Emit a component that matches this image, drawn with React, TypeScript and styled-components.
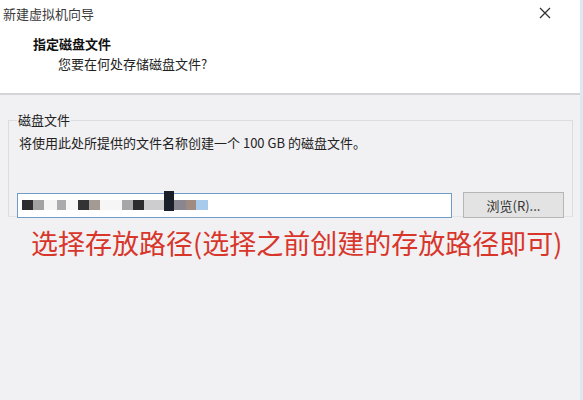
import React from "react";
import styled, { createGlobalStyle } from "styled-components";

const GlobalStyle = createGlobalStyle`
  html, body {
    margin: 0;
    padding: 0;
    background: #f1f0f2;
  }
  body {
    font-family: "Noto Sans CJK SC", "Liberation Sans", sans-serif;
    color: #1a1a1a;
  }
`;

const Window = styled.div`
  width: 583px;
  height: 400px;
  display: flex;
  flex-direction: column;
  background: #f1f0f2;
  border-right: 3px solid #dfe8f2;
  box-sizing: border-box;
  overflow: hidden;
`;

const Header = styled.div`
  height: 93px;
  background: #ffffff;
  border-bottom: 2px solid #d4d3d6;
  display: flex;
  flex-direction: column;
  box-sizing: content-box;
`;

const TitleBar = styled.div`
  height: 26px;
  display: flex;
  align-items: center;
  justify-content: space-between;
  padding: 0 29px 0 3px;
`;

const TitleText = styled.span`
  font-size: 13px;
  color: #3a3a3a;
  line-height: 1;
`;

const CloseIcon = styled.svg`
  width: 12px;
  height: 12px;
`;

const HeadTitle = styled.div`
  margin: 8px 0 0 33px;
  font-size: 13px;
  font-weight: 700;
  line-height: 20px;
  color: #111;
`;

const HeadSub = styled.div`
  margin: 0 0 0 58px;
  font-size: 13px;
  line-height: 20px;
  color: #222;
`;

const Body = styled.div`
  flex: 1;
  padding: 18px 9px 0 8px;
  display: flex;
  flex-direction: column;
`;

const GroupBox = styled.fieldset`
  margin: 0 2px 0 0;
  padding: 4px 8px 6px 8px;
  border: 1px solid #dcdbde;
  border-bottom-color: #e3e2e5;
  height: 104px;
  box-sizing: border-box;
  display: flex;
  flex-direction: column;
`;

const Legend = styled.legend`
  font-size: 13px;
  padding: 0 1px;
  margin-left: 0;
  color: #222;
  line-height: 14px;
`;

const GroupText = styled.div`
  font-size: 13px;
  line-height: 20px;
  color: #222;
  margin: 2px 0 0 2px;
`;

const PathRow = styled.div`
  margin-top: 39px;
  display: flex;
  align-items: center;
  gap: 11px;
`;

const PathInput = styled.div`
  width: 435px;
  height: 25px;
  box-sizing: border-box;
  border: 1px solid #6f9ccb;
  background: #ffffff;
  display: flex;
  align-items: center;
  padding-left: 4px;
`;

const Blur = styled.span<{ $w: number; $c: string; $tall?: boolean }>`
  display: inline-block;
  width: ${(p) => p.$w}px;
  height: ${(p) => (p.$tall ? 20 : 10)}px;
  margin-top: ${(p) => (p.$tall ? -8 : 0)}px;
  background: ${(p) => p.$c};
  flex: none;
`;

const Browse = styled.button`
  width: 101px;
  height: 26px;
  border: 1px solid #b6b6b6;
  background: #e3e3e3;
  font-family: inherit;
  font-size: 13px;
  color: #333;
  padding: 0;
  line-height: 1;
`;

const Note = styled.div`
  margin: 9px 0 0 23px;
  font-size: 27px;
  line-height: 34px;
  color: #d8362b;
  white-space: nowrap;
`;

const blocks: { w: number; c: string; tall?: boolean }[] = [
  { w: 11, c: "#2e2e30" },
  { w: 11, c: "#a2a2a4" },
  { w: 13, c: "#f4f4f5" },
  { w: 9, c: "#ababad" },
  { w: 12, c: "#f6f6f7" },
  { w: 11, c: "#333335" },
  { w: 11, c: "#a39a94" },
  { w: 22, c: "#f7f6f6" },
  { w: 11, c: "#a7a7a9" },
  { w: 11, c: "#2c2c2e" },
  { w: 20, c: "#cdcdd0" },
  { w: 10, c: "#1b1f2a", tall: true },
  { w: 12, c: "#8a8690" },
  { w: 10, c: "#a08b80" },
  { w: 12, c: "#a9cbeb" },
];

export default function App() {
  return (
    <>
      <GlobalStyle />
      <Window>
        <Header>
          <TitleBar>
            <TitleText>新建虚拟机向导</TitleText>
            <CloseIcon viewBox="0 0 12 12">
              <path d="M1 1 L11 11 M11 1 L1 11" stroke="#333" strokeWidth="1.3" fill="none" />
            </CloseIcon>
          </TitleBar>
          <HeadTitle>指定磁盘文件</HeadTitle>
          <HeadSub>您要在何处存储磁盘文件?</HeadSub>
        </Header>
        <Body>
          <GroupBox>
            <Legend>磁盘文件</Legend>
            <GroupText>将使用此处所提供的文件名称创建一个 100 GB 的磁盘文件。</GroupText>
            <PathRow>
              <PathInput>
                {blocks.map((b, i) => (
                  <Blur key={i} $w={b.w} $c={b.c} $tall={b.tall} />
                ))}
              </PathInput>
              <Browse>浏览(R)...</Browse>
            </PathRow>
          </GroupBox>
          <Note>选择存放路径(选择之前创建的存放路径即可)</Note>
        </Body>
      </Window>
    </>
  );
}
